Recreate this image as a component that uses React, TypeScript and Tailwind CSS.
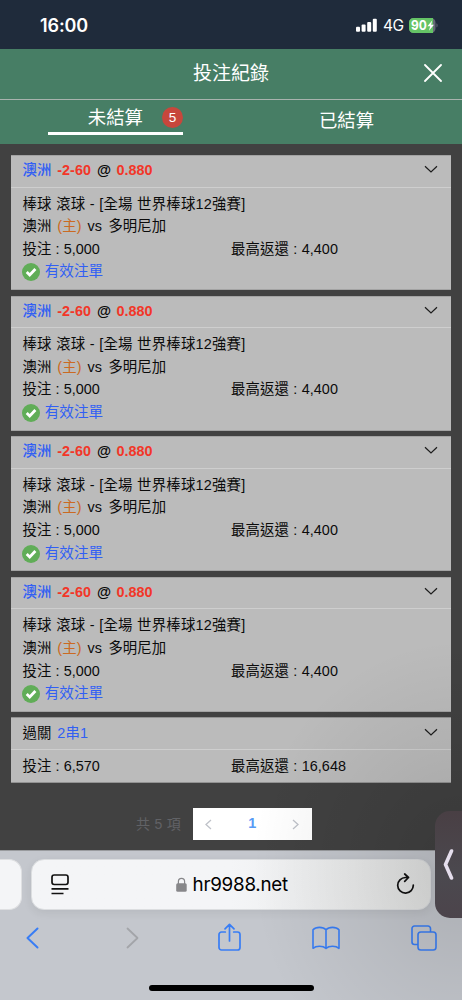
import React from 'react';

const latin = "font-['Liberation_Sans','Noto_Sans_CJK_TC',sans-serif]";

function Chevron() {
  return (
    <svg className="mb-[3px] h-[9px] w-[14px] shrink-0" viewBox="0 0 14 9" fill="none" stroke="#1c1c1c" strokeWidth="1.2">
      <path d="M1 1.3 7 7l6-5.7" />
    </svg>
  );
}

function Stake({ stake, payout }: { stake: string; payout: string }) {
  return (
    <div className="flex h-[22.6px] items-center tracking-[0.02px] [word-spacing:0.2px]">
      <span className="w-[208.6px]">投注 : {stake}</span>
      <span className="tracking-[0.08px]">最高返還 : {payout}</span>
    </div>
  );
}

function BetCard() {
  return (
    <article className="h-[135.2px] border-y border-[#a3a3a3] bg-[#bbbbbb]">
      <header className="flex h-[31.6px] items-center justify-between border-b-[1.5px] border-[#cecece] pl-[11.5px] pr-[13px] font-bold">
        <div className="mb-[2px] flex gap-[6px] leading-5">
          <span className="font-medium text-[#315ff4]">澳洲</span>
          <span className="text-[#f23628]">-2-60</span>
          <span className="text-[#080808]">@</span>
          <span className="-ml-[0.5px] text-[#f23628]">0.880</span>
        </div>
        <Chevron />
      </header>
      <div className="pl-[11.5px] pt-[5.5px]">
        <div className="flex h-[22.6px] items-center whitespace-pre tracking-[0.22px] [word-spacing:0.2px]">棒球 滾球 - [全場 世界棒球12強賽]</div>
        <div className="flex h-[22.6px] items-center">
          <span>澳洲</span>
          <span className="ml-[6px] tracking-[0.1px] text-[#cb6a22]">(主)</span>
          <span className="ml-[6px]">vs</span>
          <span className="ml-[6.5px]">多明尼加</span>
        </div>
        <Stake stake="5,000" payout="4,400" />
        <div className="-ml-[1px] flex h-[23px] items-center gap-[5.2px] text-[14.6px] text-[#315ff4]">
          <svg className="h-[18px] w-[18px]" viewBox="0 0 18 18">
            <circle cx="9" cy="9" r="9" fill="#60ad57" />
            <path d="m4.7 9 3 3 5.7-6" fill="none" stroke="white" strokeWidth="2.8" />
          </svg>
          <span>有效注單</span>
        </div>
      </div>
    </article>
  );
}

function ParlayCard() {
  return (
    <article className="h-[66px] border-y border-[#929292] bg-[#bbbbbb]">
      <header className="flex h-[31.6px] items-center justify-between border-b border-[#cecece] pl-[11.5px] pr-[13px]">
        <div className="flex gap-[6px]">
          <span>過關</span>
          <span className="tracking-[0.1px] text-[#315ff4]">2串1</span>
        </div>
        <Chevron />
      </header>
      <div className="pl-[11.5px] pt-[5.5px]">
        <Stake stake="6,570" payout="16,648" />
      </div>
    </article>
  );
}

function StatusBar() {
  return (
    <div className="flex h-[49px] items-center justify-between bg-[#1f2b3b] pl-[40px] pr-[24px] pt-[2px] font-[Inter,sans-serif] text-white">
      <span className="text-[18px] font-semibold tracking-[-0.1px]">16:00</span>
      <div className="flex items-center">
        <svg className="mb-px h-[14px] w-[21px]" viewBox="0 0 21 14" fill="white">
          <rect x="0" y="8.8" width="4" height="5" rx="1" />
          <rect x="5.6" y="6.6" width="4" height="7.2" rx="1" />
          <rect x="11.2" y="4" width="4" height="9.8" rx="1" />
          <rect x="16.8" y=".8" width="4" height="13" rx="1" />
        </svg>
        <span className="ml-[6px] w-[26px] text-[15.5px] tracking-[-0.5px]">4G</span>
        <svg className="mb-px h-[15px] w-[29px]" viewBox="0 0 29 15">
          <path d="M4.5 0H22a4.5 4.5 0 0 1 4.5 4.5v6A4.5 4.5 0 0 1 22 15H4.5A4.5 4.5 0 0 1 0 10.5v-6A4.5 4.5 0 0 1 4.5 0" fill="#666b77" />
          <path d="M4.5 0H24v15H4.5A4.5 4.5 0 0 1 0 10.5v-6A4.5 4.5 0 0 1 4.5 0" fill="#65c466" />
          <path d="M27.5 5.3c1.4.6 1.4 3.7 0 4.3z" fill="#666b77" />
          <text x="2" y="12.3" fill="white" fontFamily="Inter" fontSize="13.2" fontWeight="700" textLength="15.8" lengthAdjust="spacingAndGlyphs">90</text>
          <path d="m23.2 2.5-4.8 5.7h2.8l-1.3 4.6 5.1-6h-2.9z" fill="white" />
        </svg>
      </div>
    </div>
  );
}

function Header() {
  return (
    <div className="bg-[#477e65] text-white">
      <div className="relative flex h-[50.5px] items-center justify-center border-b-[1.5px] border-[#a8b3ae] text-[19px]">
        <h1>投注紀錄</h1>
        <svg className="absolute right-[20px] top-[15px] h-[18px] w-[18px]" viewBox="0 0 18 18" stroke="white" strokeWidth="1.8" strokeLinecap="round">
          <path d="m1 1 16 16M17 1 1 17" />
        </svg>
      </div>
      <div className="flex h-[44.5px] text-[18.4px]">
        <div className="flex w-1/2 justify-center">
          <div className="flex h-[35.5px] w-[135px] items-center justify-end border-b-[3.5px] border-white pt-[4px]">
            <span>未結算</span>
            <span className="ml-[19px] flex h-[21px] w-[21px] items-center justify-center rounded-full bg-[#c7473c] text-[13.5px]">5</span>
          </div>
        </div>
        <div className="flex h-[43px] w-1/2 items-center justify-center">已結算</div>
      </div>
    </div>
  );
}

function BrowserBar() {
  return (
    <footer className="h-[150px] border-t border-[#999b9e] bg-[#c4c7cd] pt-[8px] font-[Inter,sans-serif]">
      <div className="flex h-[51px] gap-[9px]">
        <div className="w-[22px] rounded-r-[13px] border border-l-0 border-[#dfe0e2] bg-[#f4f5f7]" />
        <div className="flex w-[400px] items-center rounded-[13px] border border-[#dcdee0] bg-linear-to-r from-[#f4f5f7] from-50% to-[#e4e5e4] pl-[18.5px] pr-[15px] shadow-[0_3px_10px_rgba(0,0,0,0.07)]">
          <svg className="h-[21px] w-[18px]" viewBox="0 0 18 21" fill="none" stroke="#111" strokeWidth="1.7">
            <rect x="1" y="1" width="16" height="9.5" rx="2.2" />
            <path d="M.5 14.8h17M.5 19.5h12" />
          </svg>
          <div className="flex flex-1 items-center justify-center pr-[1px] pt-[2px]">
            <svg className="mb-[2px] h-[15px] w-[11px]" viewBox="0 0 11 15">
              <path d="M2.4 7V4.5a3.1 3.1 0 0 1 6.2 0V7" fill="none" stroke="#87878a" strokeWidth="1.2" />
              <rect x=".2" y="6.2" width="10.5" height="8.5" rx="1.5" fill="#87878a" />
            </svg>
            <span className="ml-[6px] text-[18.8px] tracking-[-0.25px] text-black">hr9988.net</span>
          </div>
          <svg className="mb-[2px] h-[21px] w-[19px]" viewBox="0 0 19 21" fill="none" stroke="#111" strokeWidth="1.7" strokeLinecap="round" strokeLinejoin="round">
            <path d="M17.3 12A7.8 7.8 0 1 1 9.5 4.5H12.5M8.7 1l3.8 3.5-3.8 3.8" />
          </svg>
        </div>
      </div>
      <nav className="flex h-[55px] items-center pl-[26px]">
        <svg className="h-[22px] w-[13px]" viewBox="0 0 13 22" fill="none" stroke="#387df5" strokeWidth="2" strokeLinecap="round" strokeLinejoin="round"><path d="m11.5 1.5-10 9.5 10 9.5" /></svg>
        <svg className="ml-[87px] h-[22px] w-[13px]" viewBox="0 0 13 22" fill="none" stroke="#a3a5a9" strokeWidth="1.8" strokeLinecap="round" strokeLinejoin="round"><path d="m1.5 1.5 10 9.5-10 9.5" /></svg>
        <svg className="mb-[1px] ml-[78.5px] h-[28px] w-[23px]" viewBox="0 0 23 28" fill="none" stroke="#387df5" strokeWidth="1.7" strokeLinecap="round" strokeLinejoin="round">
          <path d="M7.3 9H3.5A2.5 2.5 0 0 0 1 11.5v13A2.5 2.5 0 0 0 3.5 27h16a2.5 2.5 0 0 0 2.5-2.5v-13A2.5 2.5 0 0 0 19.5 9h-3.8M11.5 18V1.5M7 5.8l4.5-4.5L16 5.8" />
        </svg>
        <svg className="ml-[71.5px] h-[24px] w-[28px]" viewBox="0 0 28 24" fill="none" stroke="#387df5" strokeWidth="1.6" strokeLinecap="round" strokeLinejoin="round">
          <path d="M14 3.8C11 .5 4 .5 1 3.8v18.5c3-2.7 10-2.7 13 0 3-2.7 10-2.7 13 0V3.8c-3-3.3-10-3.3-13 0v18.5" />
        </svg>
        <svg className="ml-[71px] h-[26px] w-[26px]" viewBox="0 0 26 26" fill="none" stroke="#387df5" strokeWidth="1.6">
          <path d="M7 19.5H3.5A2.5 2.5 0 0 1 1 17V3.5A2.5 2.5 0 0 1 3.5 1H17a2.5 2.5 0 0 1 2.5 2.5V7" />
          <rect x="7" y="7" width="18" height="18" rx="2.8" />
        </svg>
      </nav>
      <div className="mx-auto mt-[20px] h-[6px] w-[165px] rounded-full bg-black" />
    </footer>
  );
}

export default function App() {
  return (
    <div className={`relative h-[1000px] w-[462px] overflow-hidden bg-[#414141] ${latin} text-[14.4px] text-[#0b0b0b]`}>
      <StatusBar />
      <Header />
      <main className="flex h-[706px] flex-col px-[11px] pt-[11px]">
        <div className="flex flex-col gap-[5.4px]">
          <BetCard />
          <BetCard />
          <BetCard />
          <BetCard />
          <ParlayCard />
        </div>
        <div className="mt-[25px] flex h-[31.5px] items-center pl-[125px]">
          <span className="w-[56.5px] whitespace-nowrap text-[14px] tracking-[0.3px] text-[#616266]">共 5 項</span>
          <div className="flex h-full w-[119.5px] items-center justify-between bg-white px-[12.5px] text-[#bfc2c9]">
            <svg className="h-[11px] w-[7px]" viewBox="0 0 7 11" fill="none" stroke="currentColor" strokeWidth="1.3"><path d="M6 1 1 5.5 6 10" /></svg>
            <span className="text-[14.4px] font-bold text-[#579bf6]">1</span>
            <svg className="h-[11px] w-[7px]" viewBox="0 0 7 11" fill="none" stroke="currentColor" strokeWidth="1.3"><path d="m1 1 5 4.5L1 10" /></svg>
          </div>
        </div>
      </main>
      <BrowserBar />
      <div className="pointer-events-none absolute right-0 top-[590px] h-[410px] w-[240px] bg-[radial-gradient(ellipse_210px_230px_at_100%_68%,rgba(0,0,0,0.13),rgba(0,0,0,0.06)_50%,transparent)]" />
      <div className="absolute right-0 top-[811px] flex h-[107px] w-[27px] items-center rounded-l-[15px] bg-linear-to-b from-[#493f44] via-[#4b494f] via-60% to-[#4c444b] pl-[8px]">
        <svg className="h-[31px] w-[11px]" viewBox="0 0 11 31" fill="none" stroke="#e5deed" strokeWidth="3.6" strokeLinecap="round" strokeLinejoin="round"><path d="M8.5 2 2.5 15.5l6 13.5" /></svg>
      </div>
    </div>
  );
}
